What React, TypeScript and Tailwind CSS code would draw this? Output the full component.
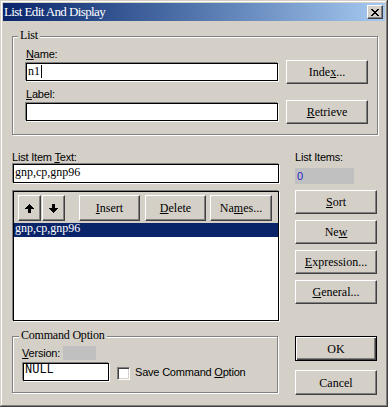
import React from 'react';

const field = 'bg-white border border-black shadow-[-1px_-1px_0_#808080,1px_1px_0_#fff]';
const group = 'relative border border-[#808080] shadow-[inset_1px_1px_0_#fff,1px_1px_0_#fff]';

type BtnProps = { children: React.ReactNode; className?: string; isDefault?: boolean };

const Btn = ({ children, className = '', isDefault = false }: BtnProps) => (
    <button
        className={`flex items-center justify-center bg-[#d4d0c8] text-black text-[12px] leading-[14px] ${
            isDefault
                ? 'border border-black shadow-[inset_1px_1px_0_#fff,inset_-1px_-1px_0_#404040,inset_-2px_-2px_0_#808080]'
                : 'border border-t-white border-l-white border-r-[#404040] border-b-[#404040] shadow-[inset_-1px_-1px_0_#808080]'
        } ${className}`}
    >
        {children}
    </button>
);

const Label = ({ children, className = '' }: { children: React.ReactNode; className?: string }) => (
    <div className={`font-['Liberation_Sans',sans-serif] text-[11px] tracking-[-0.2px] text-black ${className}`}>{children}</div>
);

const Arrow = ({ down = false }: { down?: boolean }) => (
    <svg width="9" height="9" viewBox="0 0 9 9" className={down ? 'rotate-180' : ''} shapeRendering="crispEdges">
        <path d="M4 0h1v1h1v1h1v1h1v1h1v1H6v4H3V5H0V4h1V3h1V2h1V1h1z" fill="#000" />
    </svg>
);

const CloseGlyph = () => (
    <svg width="8" height="7" viewBox="0 0 8 7" shapeRendering="crispEdges">
        <path
            d="M0 0h2v1H0zM6 0h2v1H6zM1 1h2v1H1zM5 1h2v1H5zM2 2h4v1H2zM3 3h2v1H3zM2 4h4v1H2zM1 5h2v1H1zM5 5h2v1H5zM0 6h2v1H0zM6 6h2v1H6z"
            fill="#000"
        />
    </svg>
);

const App = () => {
    return (
        <div className="w-[388px] h-[407px] overflow-hidden bg-[#d4d0c8] p-[3px] font-['Liberation_Serif',serif] shadow-[inset_-1px_-1px_0_#404040,inset_1px_1px_0_#d4d0c8,inset_-2px_-2px_0_#808080,inset_2px_2px_0_#fff]">
            {/* Title bar */}
            <div className="h-[18px] flex items-center justify-between bg-linear-to-r from-[#0a246a] to-[#a6caf0] pl-[1px] pr-[2px]">
                <span className="text-white text-[13px] leading-[18px] tracking-[-0.6px]">List Edit And Display</span>
                <button className="w-[16px] h-[14px] flex items-center justify-center bg-[#d4d0c8] border border-t-white border-l-white border-r-[#404040] border-b-[#404040] shadow-[inset_-1px_-1px_0_#808080]">
                    <CloseGlyph />
                </button>
            </div>

            <div className="pl-[9px] pt-[15px]">
                {/* List group */}
                <div className={`${group} w-[366px] h-[99px]`}>
                    <span className="absolute left-[5px] top-[-9px] bg-[#d4d0c8] px-[2px] text-[12px] leading-[14px] tracking-[-0.2px]">List</span>
                    <div className="pt-[10px] pl-[13px]">
                        <div className="flex items-start">
                            <div className="w-[252px]">
                                <Label className="h-[14px] leading-[14px]">
                                    <u>N</u>ame:
                                </Label>
                                <div className={`${field} mt-[2px] h-[18px] flex items-start pl-[1px] text-[12px] leading-[14px]`}>
                                    n1
                                    <span className="ml-[1px] mt-[1px] w-[1px] h-[13px] bg-black" />
                                </div>
                            </div>
                            <Btn className="mt-[13px] ml-[8px] w-[82px] h-[24px]">
                                Inde<u>x</u>...
                            </Btn>
                        </div>
                        <div className="flex items-start mt-[3px]">
                            <div className="w-[252px]">
                                <Label className="h-[14px] leading-[14px]">
                                    <u>L</u>abel:
                                </Label>
                                <div className={`${field} mt-[2px] h-[18px]`} />
                            </div>
                            <Btn className="mt-[13px] ml-[8px] w-[82px] h-[24px]">
                                <u>R</u>etrieve
                            </Btn>
                        </div>
                    </div>
                </div>

                <div className="flex mt-[16px]">
                    {/* Left column */}
                    <div className="w-[268px]">
                        <Label className="h-[13px] leading-[13px]">
                            List Item <u>T</u>ext:
                        </Label>
                        <div className={`${field} ml-[1px] w-[266px] h-[19px] pl-[1px] text-[12px] leading-[14px]`}>gnp,cp,gnp96</div>

                        <div className={`${field} ml-[1px] w-[266px] h-[130px] mt-[8px] flex flex-col`}>
                            <div className="h-[31px] bg-[#d4d0c8] flex items-start pt-[3px] pl-[4px]">
                                <Btn className="w-[23px] h-[26px]">
                                    <Arrow />
                                </Btn>
                                <Btn className="ml-[1px] w-[23px] h-[26px]">
                                    <Arrow down />
                                </Btn>
                                <Btn className="ml-[14px] w-[61px] h-[26px]">
                                    <u>I</u>nsert
                                </Btn>
                                <Btn className="ml-[5px] w-[61px] h-[26px]">
                                    <u>D</u>elete
                                </Btn>
                                <Btn className="ml-[4px] w-[62px] h-[26px]">
                                    Na<u>m</u>es...
                                </Btn>
                            </div>
                            <div className="h-[14px] bg-[#0a246a] text-white pl-[1px] text-[12px] leading-[11px]">gnp,cp,gnp96</div>
                        </div>

                        {/* Command Option group */}
                        <div className={`${group} w-[266px] h-[57px] mt-[15px]`}>
                            <span className="absolute left-[6px] top-[-9px] bg-[#d4d0c8] px-[2px] text-[12px] leading-[14px] tracking-[-0.2px]">
                                Command Option
                            </span>
                            <div className="pt-[9px] pl-[9px]">
                                <div className="flex h-[14px]">
                                    <Label className="w-[41px] leading-[14px]">
                                        <u>V</u>ersion:
                                    </Label>
                                    <div className="w-[33px] h-[14px] bg-[#c0c0c0]" />
                                </div>
                                <div className="flex items-start mt-[3px]">
                                    <div className={`${field} ml-[1px] w-[86px] h-[18px] pl-[1px] text-[12px] leading-[12px] font-['Liberation_Mono',monospace]`}>
                                        NULL
                                    </div>
                                    <div className="ml-[8px] mt-[4px] w-[13px] h-[13px] bg-white border border-t-[#808080] border-l-[#808080] border-r-white border-b-white shadow-[inset_1px_1px_0_#404040,inset_-1px_-1px_0_#d4d0c8]" />
                                    <Label className="ml-[5px] mt-[3px] leading-[13px]">
                                        Save Command <u>O</u>ption
                                    </Label>
                                </div>
                            </div>
                        </div>
                    </div>

                    {/* Right column */}
                    <div className="ml-[15px] w-[82px]">
                        <Label className="h-[13px] leading-[13px]">List Items:</Label>
                        <div className="mt-[4px] w-[59px] h-[16px] bg-[#c0c0c0] pl-[2px] text-[11px] leading-[16px] text-[#2020c0] font-['Liberation_Sans',sans-serif]">0</div>
                        <div className="mt-[6px] flex flex-col gap-[6px]">
                            <Btn className="w-[82px] h-[24px]">
                                <u>S</u>ort
                            </Btn>
                            <Btn className="w-[82px] h-[24px]">
                                Ne<u>w</u>
                            </Btn>
                            <Btn className="w-[82px] h-[24px]">
                                <u>E</u>xpression...
                            </Btn>
                            <Btn className="w-[82px] h-[24px]">
                                <u>G</u>eneral...
                            </Btn>
                        </div>
                        <Btn isDefault className="mt-[32px] w-[82px] h-[25px]">
                            OK
                        </Btn>
                        <Btn className="mt-[9px] w-[82px] h-[25px]">Cancel</Btn>
                    </div>
                </div>
            </div>
        </div>
    );
};

export default App;
